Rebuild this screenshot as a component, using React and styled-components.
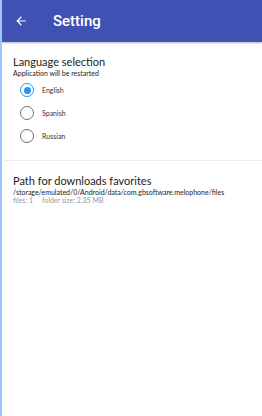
import styled, { createGlobalStyle } from "styled-components";

const Global = createGlobalStyle`
	html, body {
		margin: 0;
		padding: 0;
		background: #fff;
	}
	body {
		font-family: Lato, "Noto Sans", sans-serif;
	}
`;

const Screen = styled.div`
	width: 262px;
	height: 416px;
	position: relative;
	overflow: hidden;
	background: #fff;
	border-left: 2px solid #9fc3ff;
	box-sizing: border-box;
`;

const Toolbar = styled.header`
	height: 42px;
	background: #3f51b5;
	display: flex;
	align-items: center;
	box-shadow: 0 1px 2px rgba(0, 0, 0, 0.3);
	color: #fff;
`;

const BackButton = styled.div`
	width: 38px;
	display: flex;
	justify-content: center;
`;

const Title = styled.div`
	font-family: Roboto, sans-serif;
	font-size: 15px;
	font-weight: 500;
	margin-left: 13px;
`;

const Section = styled.section`
	padding: ${(p) => p.$pad};
`;

const Heading = styled.div`
	font-size: 11px;
	color: #222;
	line-height: 14px;
`;

const Sub = styled.div`
	font-size: 7px;
	color: ${(p) => (p.$muted ? "#9a9a9a" : "#222")};
	line-height: 8px;
	white-space: nowrap;
`;

const Options = styled.div`
	display: flex;
	flex-direction: column;
	gap: 9px;
	margin-top: 6px;
	padding-left: 7px;
`;

const Option = styled.label`
	display: flex;
	align-items: center;
	gap: 8px;
	font-size: 7px;
	color: #333;
	height: 14px;
`;

const Radio = styled.span`
	width: 14px;
	height: 14px;
	border-radius: 50%;
	box-sizing: border-box;
	border: 1.6px solid ${(p) => (p.$on ? "#2196f3" : "#6f6f6f")};
	display: flex;
	align-items: center;
	justify-content: center;
	&::after {
		content: "";
		width: 7px;
		height: 7px;
		border-radius: 50%;
		background: ${(p) => (p.$on ? "#2196f3" : "transparent")};
	}
`;

const Divider = styled.hr`
	border: none;
	border-top: 1px solid #ececec;
	margin: 0 0 0 2px;
`;

const languages = ["English", "Spanish", "Russian"];

export default function App() {
	return (
		<Screen>
			<Global />
			<Toolbar>
				<BackButton>
					<svg width="14" height="14" viewBox="0 0 24 24">
						<path
							d="M20 11H7.83l5.59-5.59L12 4l-8 8 8 8 1.41-1.41L7.83 13H20v-2z"
							fill="#fff"
						/>
					</svg>
				</BackButton>
				<Title>Setting</Title>
			</Toolbar>
			<Section $pad="13px 0 17px 11px">
				<Heading>Language selection</Heading>
				<Sub>Application will be restarted</Sub>
				<Options>
					{languages.map((l, i) => (
						<Option key={l}>
							<Radio $on={i === 0} />
							{l}
						</Option>
					))}
				</Options>
			</Section>
			<Divider />
			<Section $pad="13px 0 0 11px">
				<Heading>Path for downloads favorites</Heading>
				<Sub>/storage/emulated/0/Android/data/com.gbsoftware.melophone/files</Sub>
				<Sub $muted>files: 1&nbsp;&nbsp;&nbsp;&nbsp; folder size: 2.35 MB</Sub>
			</Section>
		</Screen>
	);
}
